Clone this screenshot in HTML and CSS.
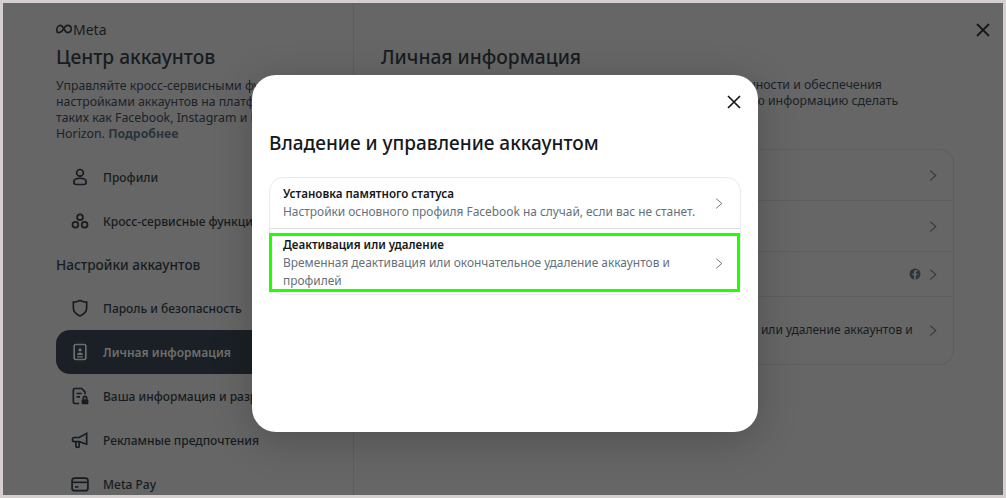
FILE: index.html
```html
<!DOCTYPE html>
<html lang="ru">
<head>
    <meta charset="UTF-8">
    <title>Центр аккаунтов</title>
    <link rel="stylesheet" href="styles.css">
</head>
<body>
    <div class="frame">
        <aside class="sidebar">
            <div class="meta-logo">
                <svg viewBox="0 0 20 12" width="16" height="10"><path d="M3 10.500C1.500 10.500 1 9 1 7.500 1 4 3 1.500 5.500 1.500c4 0 5 9 9 9 3 0 4.500-1.500 4.500-4.500s-1.500-4.500-4.500-4.500C11 1.500 9 7 7 9c-1.500 1.500-3 1.500-4 1.500z" fill="none" stroke="currentColor" stroke-width="2"/></svg>
                <span>Meta</span>
            </div>
            <h1 class="side-title">Центр аккаунтов</h1>
            <p class="side-desc">Управляйте кросс-сервисными функциями и настройками аккаунтов на платформах Meta, таких как Facebook, Instagram и Meta Horizon. <b>Подробнее</b></p>

            <ul class="menu menu-top">
                <li class="menu-item">
                    <svg viewBox="0 0 24 24"><circle cx="12" cy="7" r="4"/><path d="M4.500 18c0-3 3-4.500 7.500-4.500s7.500 1.500 7.500 4.500c0 2-1.500 3-3 3h-9c-1.500 0-3-1-3-3z"/></svg>
                    <span>Профили</span>
                </li>
                <li class="menu-item">
                    <svg viewBox="0 0 24 24"><circle cx="12" cy="7.500" r="3.500"/><circle cx="6.500" cy="16.500" r="3.500"/><circle cx="17.500" cy="16.500" r="3.500"/></svg>
                    <span>Кросс-сервисные функции</span>
                </li>
            </ul>

            <h2 class="side-sub">Настройки аккаунтов</h2>

            <ul class="menu">
                <li class="menu-item">
                    <svg viewBox="0 0 24 24"><path d="M12 3c3 1.500 5 2 8 2v7c0 4.500-3.500 7.500-8 9.500-4.500-2-8-5-8-9.500V5c3 0 5-.5 8-2z"/></svg>
                    <span>Пароль и безопасность</span>
                </li>
                <li class="menu-item active">
                    <svg viewBox="0 0 24 24"><rect x="5" y="3" width="14" height="18" rx="2"/><circle cx="12" cy="9.500" r="2" class="dot"/><path d="M8.500 15.500c0-2 1.500-3 3.500-3s3.500 1 3.500 3zM8.500 17h7v1.500h-7z" class="dot"/></svg>
                    <span>Личная информация</span>
                </li>
                <li class="menu-item">
                    <svg viewBox="0 0 24 24"><path d="M11 21H6a2 2 0 0 1-2-2V5a2 2 0 0 1 2-2h8l4 4v3"/><path d="M8 9h6M8 13h4"/><rect x="14" y="16" width="8" height="6" rx="1" class="dot"/><path d="M16 16v-1.500a2 2 0 0 1 4 0V16"/></svg>
                    <span>Ваша информация и разрешения</span>
                </li>
                <li class="menu-item">
                    <svg viewBox="0 0 24 24"><path d="M20 4v13L11 14H5a2 2 0 0 1-2-2v-1a2 2 0 0 1 2-2h6z"/><path d="M7 14v5a2 2 0 0 0 4 0v-5"/></svg>
                    <span>Рекламные предпочтения</span>
                </li>
                <li class="menu-item">
                    <svg viewBox="0 0 24 24"><rect x="2.500" y="5" width="19" height="15" rx="3"/><path d="M3 10h18"/><path d="M6 15.500h4"/></svg>
                    <span>Meta Pay</span>
                </li>
            </ul>
        </aside>

        <main class="content">
            <h1 class="content-title">Личная информация</h1>
            <p class="content-desc">Meta использует такую информацию для проверки вашей личности и обеспечения безопасности сообщества Meta. Вы определяете, какую личную информацию сделать общедоступной.</p>
            <div class="info-card">
                <div class="info-row"><span>Контактная информация</span><svg class="chev" viewBox="0 0 10 16"><path d="M1.500 2l7 6-7 6"/></svg></div>
                <div class="info-row"><span>Дата рождения</span><svg class="chev" viewBox="0 0 10 16"><path d="M1.500 2l7 6-7 6"/></svg></div>
                <div class="info-row info-row-fb"><span>Подтверждение личности</span>
                    <svg class="fb" viewBox="0 0 24 24"><circle cx="12" cy="12" r="11"/><path class="fb-f" d="M13.500 23v-8.500h3l.5-3.500h-3.500V9c0-1 .5-2 2-2H17V4c-.5 0-1.500-.2-2.500-.2-2.800 0-4.500 1.700-4.500 4.700v2.500H7v3.500h3V23z"/></svg>
                    <svg class="chev" viewBox="0 0 10 16"><path d="M1.500 2l7 6-7 6"/></svg></div>
                <div class="info-row info-row-tall"><div class="info-text"><b>Владение и управление аккаунтом</b><span>Управление вашими данными, временная деактивация или удаление аккаунтов и профилей</span></div><svg class="chev" viewBox="0 0 10 16"><path d="M1.500 2l7 6-7 6"/></svg></div>
            </div>
        </main>

        <svg class="page-close" viewBox="0 0 16 16"><path d="M2 2l12 12M14 2L2 14"/></svg>

        <section class="modal">
            <svg class="modal-close" viewBox="0 0 16 16"><path d="M2 2l12 12M14 2L2 14"/></svg>
            <h2 class="modal-title">Владение и управление аккаунтом</h2>
            <div class="option-list">
                <div class="option">
                    <div class="option-text">
                        <strong>Установка памятного статуса</strong>
                        <span>Настройки основного профиля Facebook на случай, если вас не станет.</span>
                    </div>
                    <svg class="chev" viewBox="0 0 10 16"><path d="M1.500 2l7 6-7 6"/></svg>
                </div>
                <div class="option option-marked">
                    <div class="option-text">
                        <strong>Деактивация или удаление</strong>
                        <span>Временная деактивация или окончательное удаление аккаунтов и профилей</span>
                    </div>
                    <svg class="chev" viewBox="0 0 10 16"><path d="M1.500 2l7 6-7 6"/></svg>
                </div>
            </div>
        </section>
    </div>
</body>
</html>
```
FILE: styles.css
```css
:root {
    --overlay: #666666;
    --ink: #161c21;
    --line: #5e5e5e;
    --muted: #65707a;
}

* {
    margin: 0;
    padding: 0;
    box-sizing: border-box;
}

html, body {
    width: 1006px;
    height: 498px;
    overflow: hidden;
}

body {
    font-family: "Noto Sans", "Open Sans", sans-serif;
    color: var(--ink);
}

.frame {
    position: relative;
    width: 1006px;
    height: 498px;
    border: 3px solid #d6cfcf;
    background: var(--overlay);
    overflow: hidden;
    display: grid;
    grid-template-columns: 351px 1fr;
}

/* sidebar */
.sidebar {
    padding: 17px 0 0 53px;
    border-right: 1px solid var(--line);
    height: 492px;
    overflow: hidden;
}

.meta-logo {
    display: flex;
    align-items: center;
    gap: 1px;
    height: 18px;
    font-size: 14px;
}

.side-title {
    font-size: 19.2px;
    font-weight: 500;
    line-height: 28px;
    margin-top: 5px;
}

.side-desc {
    font-size: 12.3px;
    line-height: 16px;
    margin-top: 7px;
    width: 272px;
    color: #1b2228;
}

.side-desc b {
    font-weight: 700;
    color: #2a343b;
}

.menu {
    list-style: none;
    margin-top: 11px;
}

.menu-top {
    margin-top: 13px;
}

.menu-item {
    display: flex;
    align-items: center;
    gap: 13px;
    height: 44px;
    padding-left: 14px;
    width: 284px;
    font-size: 12px;
    font-weight: 500;
    border-radius: 14px;
    white-space: nowrap;
}

.menu-item svg {
    width: 20px;
    height: 20px;
    flex-shrink: 0;
    fill: none;
    stroke: currentColor;
    stroke-width: 2;
}

.menu-item .dot {
    fill: currentColor;
    stroke: none;
}

.menu-item.active {
    background: #1a2025;
    color: #6e6e6e;
    font-weight: 600;
}

.side-sub {
    font-size: 13.6px;
    font-weight: 500;
    line-height: 20px;
    margin-top: 12px;
}

/* main column behind the dialog */
.content {
    padding: 40px 49px 0 27px;
}

.content-title {
    font-size: 19.2px;
    font-weight: 500;
    line-height: 28px;
}

.content-desc {
    font-size: 12.3px;
    line-height: 16px;
    margin-top: 6px;
    width: 530px;
    color: #1b2228;
}

.info-card {
    margin-top: 24px;
    width: 573px;
    border: 1px solid var(--line);
    border-radius: 14px;
    font-size: 12px;
}

.info-row {
    display: flex;
    align-items: center;
    justify-content: space-between;
    height: 51px;
    padding: 0 16px;
    border-bottom: 1px solid var(--line);
}

.info-row-fb {
    height: 45px;
    gap: 8px;
}

.info-row-fb span {
    margin-right: auto;
}

.info-row-tall {
    height: 67px;
    padding-left: 47px;
    border-bottom: none;
}

.info-text {
    display: flex;
    flex-direction: column;
    line-height: 18px;
    width: 490px;
}

.info-text b {
    font-weight: 500;
    line-height: 16px;
}

.chev {
    width: 8px;
    height: 13px;
    flex-shrink: 0;
    fill: none;
    stroke: #30383f;
    stroke-width: 1.3;
}

.option .chev {
    stroke: #5f6770;
    stroke-width: 1.1;
}

.fb {
    width: 12px;
    height: 12px;
    fill: #2a3640;
}

.fb-f {
    fill: var(--overlay);
}

.page-close {
    position: absolute;
    top: 19px;
    right: 12px;
    width: 16px;
    height: 16px;
    fill: none;
    stroke: #14181c;
    stroke-width: 1.8;
}

/* dialog */
.modal {
    position: absolute;
    top: 72px;
    left: 249px;
    width: 506px;
    height: 357px;
    background: #fff;
    border-radius: 24px;
    padding: 53px 17px 0;
    box-shadow: 0 8px 40px rgba(0, 0, 0, 0.22);
}

.modal-close {
    position: absolute;
    top: 19px;
    right: 16px;
    width: 16px;
    height: 16px;
    fill: none;
    stroke: #14181c;
    stroke-width: 1.7;
}

.modal-title {
    font-size: 19px;
    font-weight: 500;
    line-height: 30px;
    color: #15191d;
}

.option-list {
    margin-top: 19px;
    width: 472px;
    border: 1px solid #e8eaed;
    border-radius: 14px;
}

.option {
    display: flex;
    align-items: center;
    justify-content: space-between;
    padding: 8px 17px 8px 13px;
    border-bottom: 1px solid #dadde1;
}

.option-marked {
    margin: 4px 0 2px -1px;
    width: 471px;
    padding: 4px 17px 3px 14px;
    border-bottom: none;
    outline: 3px solid #22ff00;
    outline-offset: -3px;
}

.option-text {
    display: flex;
    flex-direction: column;
    width: 425px;
}

.option-text strong {
    font-size: 11.6px;
    font-weight: 600;
    line-height: 16px;
    color: #14181c;
}

.option-text span {
    font-size: 11.9px;
    line-height: 18px;
    color: var(--muted);
}
```
